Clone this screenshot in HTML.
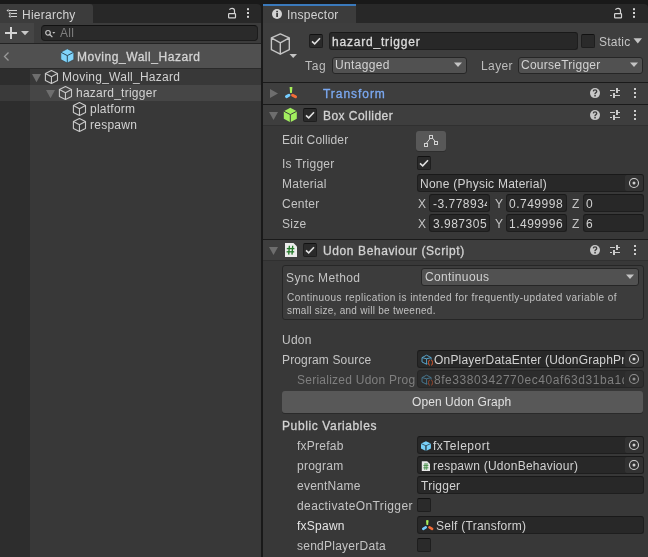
<!DOCTYPE html>
<html><head><meta charset="utf-8">
<style>
*{margin:0;padding:0;box-sizing:border-box}
html,body{width:648px;height:557px;overflow:hidden;background:#191919;font-family:"Liberation Sans",sans-serif;}
.a{position:absolute}
.t{will-change:transform;position:absolute;font-size:12px;line-height:14px;white-space:nowrap;color:#d2d2d2;letter-spacing:0.25px}
.b{-webkit-text-stroke:0.3px currentColor}
.fld{position:absolute;background:#282828;border:1px solid #1e1e1e;border-top-color:#191919;border-radius:3px}
.pop{position:absolute;background:#515151;border:1px solid #262626;border-radius:3px}
.chk{position:absolute;width:14px;height:14px;background:#2a2a2a;border:1px solid #1e1e1e;border-top-color:#111;border-radius:2px}
svg{position:absolute;overflow:visible}
</style></head><body>

<!-- ============ HIERARCHY PANEL ============ -->
<div class="a" style="left:0;top:4px;width:261px;height:19px;background:#282828;border-top-right-radius:4px"></div>
<div class="a" style="left:0;top:4px;width:93px;height:19px;background:#3c3c3c;border-top-right-radius:3px"></div>
<!-- hierarchy icon -->
<svg style="left:0;top:0" width="24" height="24">
  <g fill="none" stroke="#d2d2d2" stroke-width="1">
    <line x1="9" y1="10.5" x2="17" y2="10.5"/>
    <line x1="11" y1="13.5" x2="17" y2="13.5"/>
    <line x1="11" y1="16.5" x2="17" y2="16.5"/>
    <line x1="9.5" y1="11.5" x2="9.5" y2="16.5" stroke-width="0.6" opacity="0.6"/>
  </g>
  <g fill="#d2d2d2"><path d="M6.5 10.5 L8.5 9 L8.5 12Z"/><path d="M8.5 13.5 L10.5 12 L10.5 15Z"/><path d="M8.5 16.5 L10.5 15 L10.5 18Z"/></g>
</svg>
<div class="t" style="left:22px;top:8px">Hierarchy</div>
<!-- lock + kebab -->
<svg style="left:220px;top:4px" width="40" height="18">
  <rect x="8.6" y="9.6" width="6.9" height="4.2" rx="0.6" fill="none" stroke="#d4d4d4" stroke-width="1.2"/>
  <path d="M9.4 5.7 Q10.4 4.3 12 4.3 Q14.5 4.3 14.5 6.6 L14.5 9.6" fill="none" stroke="#d4d4d4" stroke-width="1.2"/>
  <rect x="27" y="4.2" width="2" height="2" fill="#d4d4d4"/>
  <rect x="27" y="8" width="2" height="2" fill="#d4d4d4"/>
  <rect x="27" y="11.8" width="2" height="2" fill="#d4d4d4"/>
</svg>

<!-- toolbar -->
<div class="a" style="left:0;top:23px;width:261px;height:20px;background:#3c3c3c"></div>
<div class="a" style="left:0;top:23px;width:34px;height:20px;background:#454545"></div>
<div class="a" style="left:0;top:43px;width:261px;height:1px;background:#232323"></div>
<svg style="left:0;top:23px" width="34" height="21">
  <rect x="5" y="9" width="12" height="2" fill="#d4d4d4"/>
  <rect x="10" y="4" width="2" height="12" fill="#d4d4d4"/>
  <path d="M21 8 L29 8 L25 12.3Z" fill="#c8c8c8"/>
</svg>
<div class="fld" style="left:41px;top:25px;width:217px;height:16px;border-radius:4px;background:#2a2a2a;border-color:#1c1c1c;border-top-color:#111"></div>
<svg style="left:41px;top:25px" width="20" height="16">
  <circle cx="7" cy="7.8" r="2.3" fill="none" stroke="#c4c4c4" stroke-width="1.2"/>
  <line x1="8.7" y1="9.5" x2="11.4" y2="12.2" stroke="#c4c4c4" stroke-width="1.2"/>
  <path d="M11.3 6.9 L14.3 6.9 L12.8 8.8Z" fill="#c4c4c4"/>
</svg>
<div class="t" style="left:60px;top:26px;color:#7f7f7f">All</div>

<!-- hierarchy body -->
<div class="a" style="left:0;top:44px;width:261px;height:513px;background:#383838"></div>
<div class="a" style="left:0;top:69px;width:30px;height:488px;background:#2d2d2d"></div>
<!-- prefab header -->
<div class="a" style="left:0;top:44px;width:261px;height:24px;background:#505050"></div>
<div class="a" style="left:0;top:68px;width:261px;height:1px;background:#2a2a2a"></div>
<svg style="left:0;top:44px" width="14" height="24">
  <path d="M8.5 8.5 L4.5 12.5 L8.5 16.5" fill="none" stroke="#9a9a9a" stroke-width="1.3"/>
</svg>
<!-- blue cube -->
<svg style="left:60px;top:48px" width="16" height="16">
  <path d="M7.3 0.8 L13.8 4.2 L13.8 11.6 L7.3 15 L0.8 11.6 L0.8 4.2Z" fill="#80d4fb" stroke="#3a3a3a" stroke-width="0.6"/>
  <path d="M0.8 4.2 L7.3 7.6 L13.8 4.2 M7.3 7.6 L7.3 15" fill="none" stroke="#2c4a5c" stroke-width="1"/>
</svg>
<div class="t b" style="left:77px;top:50px;color:#d4d4d4;letter-spacing:0.55px">Moving_Wall_Hazard</div>

<!-- selected row -->
<div class="a" style="left:30px;top:85px;width:231px;height:16px;background:#464646"></div>
<div class="a" style="left:0;top:85px;width:30px;height:16px;background:#3a3a3a"></div>

<!-- tree rows -->
<svg style="left:32px;top:74px" width="10" height="10"><path d="M0 0 L9 0 L4.5 8.3Z" fill="#6e6e6e"/></svg>
<svg style="left:46px;top:90px" width="10" height="10"><path d="M0 0 L9 0 L4.5 8.3Z" fill="#6e6e6e"/></svg>
<!-- wire cube template -->
<svg style="left:44px;top:69px" width="16" height="16">
  <path d="M7.45 1.45 L13.5 4.6 L13.5 11.4 L7.45 14.55 L1.4 11.4 L1.4 4.6Z M1.4 4.6 L7.45 7.75 L13.5 4.6 M7.45 7.75 L7.45 14.55" fill="none" stroke="#c8c8c8" stroke-width="1.1" stroke-linejoin="round"/>
</svg>
<svg style="left:58px;top:85px" width="16" height="16">
  <path d="M7.45 1.45 L13.5 4.6 L13.5 11.4 L7.45 14.55 L1.4 11.4 L1.4 4.6Z M1.4 4.6 L7.45 7.75 L13.5 4.6 M7.45 7.75 L7.45 14.55" fill="none" stroke="#c8c8c8" stroke-width="1.1" stroke-linejoin="round"/>
</svg>
<svg style="left:72px;top:101px" width="16" height="16">
  <path d="M7.45 1.45 L13.5 4.6 L13.5 11.4 L7.45 14.55 L1.4 11.4 L1.4 4.6Z M1.4 4.6 L7.45 7.75 L13.5 4.6 M7.45 7.75 L7.45 14.55" fill="none" stroke="#c8c8c8" stroke-width="1.1" stroke-linejoin="round"/>
</svg>
<svg style="left:72px;top:117px" width="16" height="16">
  <path d="M7.45 1.45 L13.5 4.6 L13.5 11.4 L7.45 14.55 L1.4 11.4 L1.4 4.6Z M1.4 4.6 L7.45 7.75 L13.5 4.6 M7.45 7.75 L7.45 14.55" fill="none" stroke="#c8c8c8" stroke-width="1.1" stroke-linejoin="round"/>
</svg>
<div class="t" style="left:62px;top:70px">Moving_Wall_Hazard</div>
<div class="t" style="left:76px;top:86px">hazard_trigger</div>
<div class="t" style="left:90px;top:102px">platform</div>
<div class="t" style="left:90px;top:118px">respawn</div>

<!-- ============ INSPECTOR PANEL ============ -->
<div class="a" style="left:263px;top:4px;width:385px;height:19px;background:#282828;border-top-right-radius:4px"></div>
<div class="a" style="left:263px;top:4px;width:93px;height:19px;background:#3c3c3c"></div>
<div class="a" style="left:263px;top:4px;width:93px;height:2px;background:#3a79bb"></div>
<svg style="left:263px;top:4px" width="24" height="19">
  <circle cx="14" cy="10" r="5" fill="#d2d2d2"/>
  <rect x="13.2" y="9" width="1.8" height="4" fill="#3c3c3c"/>
  <rect x="13.2" y="6.8" width="1.8" height="1.5" fill="#3c3c3c"/>
</svg>
<div class="t" style="left:287px;top:8px">Inspector</div>
<svg style="left:606px;top:4px" width="40" height="18">
  <rect x="8.6" y="9.6" width="6.9" height="4.2" rx="0.6" fill="none" stroke="#d4d4d4" stroke-width="1.2"/>
  <path d="M9.4 5.7 Q10.4 4.3 12 4.3 Q14.5 4.3 14.5 6.6 L14.5 9.6" fill="none" stroke="#d4d4d4" stroke-width="1.2"/>
  <rect x="27" y="4.2" width="2" height="2" fill="#d4d4d4"/>
  <rect x="27" y="8" width="2" height="2" fill="#d4d4d4"/>
  <rect x="27" y="11.8" width="2" height="2" fill="#d4d4d4"/>
</svg>

<div class="a" style="left:263px;top:23px;width:385px;height:534px;background:#383838"></div>

<!-- GameObject header -->
<div class="a" style="left:263px;top:23px;width:385px;height:59px;background:#3e3e3e"></div>
<svg style="left:268px;top:32px" width="32" height="28">
  <path d="M12.3 1.9 L21.3 5.9 L21.3 17.7 L12.3 22.2 L3.4 17.7 L3.4 5.9Z M3.4 5.9 L12.3 10.9 L21.3 5.9 M12.3 10.9 L12.3 22.2" fill="none" stroke="#c4c4c4" stroke-width="1.4" stroke-linejoin="round"/>
  <path d="M21.5 22 L29 22 L25.2 26Z" fill="#c4c4c4"/>
</svg>
<div class="chk" style="left:309px;top:34px"></div>
<svg style="left:309px;top:34px" width="14" height="14"><path d="M3 7.3 L5.7 9.8 L11 4.2" fill="none" stroke="#e0e0e0" stroke-width="1.6"/></svg>
<div class="fld" style="left:329px;top:32px;width:249px;height:18px"></div>
<div class="t b" style="left:332px;top:35px;color:#dcdcdc;letter-spacing:0.8px">hazard_trigger</div>
<div class="chk" style="left:581px;top:34px"></div>
<div class="t" style="left:599px;top:35px;color:#c4c4c4">Static</div>
<svg style="left:632px;top:36px" width="12" height="10"><path d="M1.5 2.3 L10 2.3 L5.8 7.5Z" fill="#c4c4c4"/></svg>

<div class="t" style="left:305px;top:59px;color:#bdbdbd;letter-spacing:0.65px">Tag</div>
<div class="pop" style="left:332px;top:57px;width:135px;height:17px"></div>
<div class="t" style="left:335px;top:58px;letter-spacing:0.33px">Untagged</div>
<svg style="left:453px;top:62px" width="10" height="6"><path d="M1 0.5 L9 0.5 L5 5Z" fill="#c4c4c4"/></svg>
<div class="t" style="left:481px;top:59px;color:#bdbdbd;letter-spacing:0.4px">Layer</div>
<div class="pop" style="left:518px;top:57px;width:125px;height:17px"></div>
<div class="t" style="left:521px;top:58px">CourseTrigger</div>
<svg style="left:629px;top:62px" width="10" height="6"><path d="M1 0.5 L9 0.5 L5 5Z" fill="#c4c4c4"/></svg>

<!-- Transform header -->
<div class="a" style="left:263px;top:82px;width:385px;height:1px;background:#1a1a1a"></div>
<div class="a" style="left:263px;top:83px;width:385px;height:21px;background:#3e3e3e"></div>
<svg style="left:270px;top:89px" width="9" height="10"><path d="M0 0 L8 4.5 L0 9Z" fill="#6e6e6e"/></svg>
<svg style="left:283px;top:86px" width="16" height="14">
  <path d="M6.6 1 L9.4 1 L8.9 7 L7.1 7Z" fill="#a8f05a"/>
  <line x1="3.5" y1="10.6" x2="5.9" y2="9.2" stroke="#74ccff" stroke-width="3" stroke-linecap="round"/>
  <line x1="9.6" y1="9.2" x2="12.5" y2="10.8" stroke="#f46c38" stroke-width="3" stroke-linecap="round"/>
</svg>
<div class="t b" style="left:323px;top:87px;color:#7ba9f2;letter-spacing:0.95px">Transform</div>
<svg style="left:588px;top:86px" width="50" height="14">
  <circle cx="7" cy="7.1" r="5" fill="#c8c8c8"/>
  <path d="M5.3 5.4 Q5.4 3.9 7 3.9 Q8.7 3.9 8.7 5.3 Q8.7 6.2 7.7 6.8 Q7 7.2 7 8.2" fill="none" stroke="#3e3e3e" stroke-width="1.4"/>
  <rect x="6.3" y="9" width="1.5" height="1.5" fill="#3e3e3e"/>
  <g fill="#cccccc">
    <rect x="22" y="4" width="5" height="1"/><rect x="28" y="2" width="2" height="5"/><rect x="30" y="4" width="2" height="1"/>
    <rect x="22" y="9" width="2" height="1"/><rect x="25" y="7" width="2" height="5"/><rect x="27" y="9" width="5" height="1"/>
    <rect x="46" y="2" width="2" height="2"/><rect x="46" y="6" width="2" height="2"/><rect x="46" y="10" width="2" height="2"/>
  </g>
</svg>

<!-- Box Collider header -->
<div class="a" style="left:263px;top:104px;width:385px;height:1px;background:#1a1a1a"></div>
<div class="a" style="left:263px;top:105px;width:385px;height:20px;background:#3e3e3e"></div>
<div class="a" style="left:263px;top:125px;width:385px;height:1px;background:#303030"></div>
<svg style="left:269px;top:111px" width="10" height="10"><path d="M0 1 L9 1 L4.5 9Z" fill="#6e6e6e"/></svg>
<svg style="left:283px;top:107px" width="16" height="16">
  <path d="M7.3 0.8 L13.8 4.2 L13.8 11.8 L7.3 15.2 L0.8 11.8 L0.8 4.2Z" fill="#a2ef5e"/>
  <path d="M0.8 4.2 L7.3 7.6 L13.8 4.2 M7.3 7.6 L7.3 15.2" fill="none" stroke="#3e3e3e" stroke-width="1"/>
</svg>
<div class="chk" style="left:303px;top:108px"></div>
<svg style="left:303px;top:108px" width="14" height="14"><path d="M3 7.3 L5.7 9.8 L11 4.2" fill="none" stroke="#e0e0e0" stroke-width="1.6"/></svg>
<div class="t b" style="left:323px;top:109px;color:#d2d2d2;letter-spacing:0.45px">Box Collider</div>
<svg style="left:588px;top:108px" width="50" height="14">
  <circle cx="7" cy="7.1" r="5" fill="#c8c8c8"/>
  <path d="M5.3 5.4 Q5.4 3.9 7 3.9 Q8.7 3.9 8.7 5.3 Q8.7 6.2 7.7 6.8 Q7 7.2 7 8.2" fill="none" stroke="#3e3e3e" stroke-width="1.4"/>
  <rect x="6.3" y="9" width="1.5" height="1.5" fill="#3e3e3e"/>
  <g fill="#cccccc">
    <rect x="22" y="4" width="5" height="1"/><rect x="28" y="2" width="2" height="5"/><rect x="30" y="4" width="2" height="1"/>
    <rect x="22" y="9" width="2" height="1"/><rect x="25" y="7" width="2" height="5"/><rect x="27" y="9" width="5" height="1"/>
    <rect x="46" y="2" width="2" height="2"/><rect x="46" y="6" width="2" height="2"/><rect x="46" y="10" width="2" height="2"/>
  </g>
</svg>

<!-- Box Collider body -->
<div class="t" style="left:282px;top:133px;color:#c4c4c4;letter-spacing:0.12px">Edit Collider</div>
<div class="a" style="left:416px;top:131px;width:30px;height:20px;background:#585858;border-radius:3px;box-shadow:0 1px 0 #2e2e2e"></div>
<svg style="left:416px;top:131px" width="30" height="20">
  <path d="M10.3 12.3 L14 7.6 M16.8 7.4 L19.2 10.6" fill="none" stroke="#d2d2d2" stroke-width="1"/>
  <rect x="13.5" y="4.5" width="3" height="3" fill="#585858" stroke="#d2d2d2" stroke-width="1"/>
  <rect x="8.5" y="12.5" width="3" height="3" fill="#585858" stroke="#d2d2d2" stroke-width="1"/>
  <rect x="18.5" y="10.5" width="3" height="3" fill="#585858" stroke="#d2d2d2" stroke-width="1"/>
</svg>
<div class="t" style="left:282px;top:157px;color:#c4c4c4">Is Trigger</div>
<div class="chk" style="left:417px;top:156px"></div>
<svg style="left:417px;top:156px" width="14" height="14"><path d="M3 7.3 L5.7 9.8 L11 4.2" fill="none" stroke="#e0e0e0" stroke-width="1.6"/></svg>
<div class="t" style="left:282px;top:177px;color:#c4c4c4">Material</div>
<div class="fld" style="left:417px;top:174px;width:227px;height:18px"></div>
<div class="a" style="left:625px;top:175px;width:18px;height:16px;background:#323232;border-radius:2px"></div>
<div class="t" style="left:420px;top:177px">None (Physic Material)</div>
<svg style="left:625px;top:174px" width="18" height="18">
  <circle cx="9" cy="9" r="4.5" fill="none" stroke="#d0d0d0" stroke-width="1.1"/>
  <circle cx="9" cy="9" r="1.5" fill="#d0d0d0"/>
</svg>
<div class="t" style="left:282px;top:197px;color:#c4c4c4">Center</div>
<div class="t" style="left:418px;top:197px;color:#c4c4c4">X</div>
<div class="fld" style="left:429px;top:194px;width:61px;height:18px"></div>
<div class="t" style="left:433px;top:197px;width:54px;overflow:hidden;letter-spacing:0.5px">-3.778934</div>
<div class="t" style="left:495px;top:197px;color:#c4c4c4">Y</div>
<div class="fld" style="left:506px;top:194px;width:61px;height:18px"></div>
<div class="t" style="left:509px;top:197px;letter-spacing:0.5px">0.749998</div>
<div class="t" style="left:572px;top:197px;color:#c4c4c4">Z</div>
<div class="fld" style="left:583px;top:194px;width:61px;height:18px"></div>
<div class="t" style="left:586px;top:197px">0</div>

<div class="t" style="left:282px;top:217px;color:#c4c4c4">Size</div>
<div class="t" style="left:418px;top:217px;color:#c4c4c4">X</div>
<div class="fld" style="left:429px;top:214px;width:61px;height:18px"></div>
<div class="t" style="left:433px;top:217px;letter-spacing:0.5px">3.987305</div>
<div class="t" style="left:495px;top:217px;color:#c4c4c4">Y</div>
<div class="fld" style="left:506px;top:214px;width:61px;height:18px"></div>
<div class="t" style="left:509px;top:217px;letter-spacing:0.5px">1.499996</div>
<div class="t" style="left:572px;top:217px;color:#c4c4c4">Z</div>
<div class="fld" style="left:583px;top:214px;width:61px;height:18px"></div>
<div class="t" style="left:586px;top:217px">6</div>

<!-- Udon Behaviour header -->
<div class="a" style="left:263px;top:239px;width:385px;height:1px;background:#1a1a1a"></div>
<div class="a" style="left:263px;top:240px;width:385px;height:20px;background:#3e3e3e"></div>
<div class="a" style="left:263px;top:260px;width:385px;height:1px;background:#303030"></div>
<svg style="left:269px;top:246px" width="10" height="10"><path d="M0 1 L9 1 L4.5 9Z" fill="#6e6e6e"/></svg>
<svg style="left:284px;top:242px" width="14" height="16">
  <path d="M1 1 L9.5 1 L13 4.5 L13 15 L1 15Z" fill="#ececec"/>
  <g stroke="#24792a" stroke-width="1.3"><line x1="5.4" y1="3.8" x2="4.7" y2="12.6"/><line x1="8.7" y1="3.8" x2="8" y2="12.6"/><line x1="2.8" y1="6.6" x2="10.4" y2="6.6"/><line x1="2.6" y1="9.8" x2="10.2" y2="9.8"/></g>
</svg>
<div class="chk" style="left:303px;top:243px"></div>
<svg style="left:303px;top:243px" width="14" height="14"><path d="M3 7.3 L5.7 9.8 L11 4.2" fill="none" stroke="#e0e0e0" stroke-width="1.6"/></svg>
<div class="t b" style="left:323px;top:244px;color:#d2d2d2;letter-spacing:0.6px">Udon Behaviour (Script)</div>
<svg style="left:588px;top:243px" width="50" height="14">
  <circle cx="7" cy="7.1" r="5" fill="#c8c8c8"/>
  <path d="M5.3 5.4 Q5.4 3.9 7 3.9 Q8.7 3.9 8.7 5.3 Q8.7 6.2 7.7 6.8 Q7 7.2 7 8.2" fill="none" stroke="#3e3e3e" stroke-width="1.4"/>
  <rect x="6.3" y="9" width="1.5" height="1.5" fill="#3e3e3e"/>
  <g fill="#cccccc">
    <rect x="22" y="4" width="5" height="1"/><rect x="28" y="2" width="2" height="5"/><rect x="30" y="4" width="2" height="1"/>
    <rect x="22" y="9" width="2" height="1"/><rect x="25" y="7" width="2" height="5"/><rect x="27" y="9" width="5" height="1"/>
    <rect x="46" y="2" width="2" height="2"/><rect x="46" y="6" width="2" height="2"/><rect x="46" y="10" width="2" height="2"/>
  </g>
</svg>

<!-- Sync box -->
<div class="a" style="left:282px;top:265px;width:362px;height:55px;background:#3c3c3c;border:1px solid #262626;border-radius:3px"></div>
<div class="t" style="left:286px;top:271px;color:#c4c4c4;letter-spacing:0.4px">Sync Method</div>
<div class="pop" style="left:421px;top:268px;width:218px;height:18px"></div>
<div class="t" style="left:425px;top:270px;letter-spacing:0.36px">Continuous</div>
<svg style="left:625px;top:274px" width="10" height="6"><path d="M1 0.5 L9 0.5 L5 5Z" fill="#c4c4c4"/></svg>
<div class="t" style="left:287px;top:292px;font-size:10px;line-height:12px;letter-spacing:0.44px;color:#c0c0c0">Continuous replication is intended for frequently-updated variable of</div>
<div class="t" style="left:287px;top:305px;font-size:10px;line-height:12px;letter-spacing:0.27px;color:#c0c0c0">small size, and will be tweened.</div>

<!-- Udon section -->
<div class="t" style="left:282px;top:333px;color:#c4c4c4">Udon</div>
<div class="t" style="left:282px;top:353px;color:#c4c4c4;letter-spacing:0.14px">Program Source</div>
<div class="fld" style="left:417px;top:350px;width:227px;height:18px"></div>
<div class="a" style="left:625px;top:351px;width:18px;height:16px;background:#323232;border-radius:2px"></div>
<svg style="left:419.5px;top:353.3px" width="16" height="14">
  <path d="M6.6 2.2 L11.1 4.6 L11.1 9 L6.6 11.2 L2 9 L2 4.6Z M2 4.6 L6.6 5.8 L11.1 4.6 M6.6 5.8 L6.6 11.2" fill="none" stroke="#5aa8d0" stroke-width="0.95" stroke-linejoin="round"/>
  <rect x="7.4" y="6.6" width="6.4" height="6.2" fill="#2a2a2a"/>
  <path d="M9.8 7.2 Q8.7 7.2 8.7 8.2 L8.7 9.2 L8 9.7 L8.7 10.2 L8.7 11.2 Q8.7 12.2 9.8 12.2 M11.2 7.2 Q12.3 7.2 12.3 8.2 L12.3 9.2 L13 9.7 L12.3 10.2 L12.3 11.2 Q12.3 12.2 11.2 12.2" fill="none" stroke="#d85a30" stroke-width="1"/>
</svg>
<div class="t" style="left:434px;top:353px;width:190px;overflow:hidden;letter-spacing:0.2px">OnPlayerDataEnter (UdonGraphProgramAsset)</div>
<svg style="left:625px;top:350px" width="18" height="18">
  <circle cx="9" cy="9" r="4.5" fill="none" stroke="#d0d0d0" stroke-width="1.1"/>
  <circle cx="9" cy="9" r="1.5" fill="#d0d0d0"/>
</svg>
<div class="t" style="left:297px;top:373px;color:#7f7f7f">Serialized Udon Prog</div>
<div class="fld" style="left:417px;top:370px;width:227px;height:18px;background:#2c2c2c;border-color:#262626"></div>
<div class="a" style="left:625px;top:371px;width:18px;height:16px;background:#303030;border-radius:2px"></div>
<svg style="left:419.5px;top:373.3px" width="16" height="14" opacity="0.6">
  <path d="M6.6 2.2 L11.1 4.6 L11.1 9 L6.6 11.2 L2 9 L2 4.6Z M2 4.6 L6.6 5.8 L11.1 4.6 M6.6 5.8 L6.6 11.2" fill="none" stroke="#5aa8d0" stroke-width="0.95" stroke-linejoin="round"/>
  <rect x="7.4" y="6.6" width="6.4" height="6.2" fill="#2a2a2a"/>
  <path d="M9.8 7.2 Q8.7 7.2 8.7 8.2 L8.7 9.2 L8 9.7 L8.7 10.2 L8.7 11.2 Q8.7 12.2 9.8 12.2 M11.2 7.2 Q12.3 7.2 12.3 8.2 L12.3 9.2 L13 9.7 L12.3 10.2 L12.3 11.2 Q12.3 12.2 11.2 12.2" fill="none" stroke="#d85a30" stroke-width="1"/>
</svg>
<div class="t" style="left:434px;top:373px;width:190px;overflow:hidden;color:#7f7f7f;letter-spacing:0.55px">8fe3380342770ec40af63d31ba1d2c</div>
<svg style="left:625px;top:370px" width="18" height="18" opacity="0.6">
  <circle cx="9" cy="9" r="4.5" fill="none" stroke="#d0d0d0" stroke-width="1.1"/>
  <circle cx="9" cy="9" r="1.5" fill="#d0d0d0"/>
</svg>
<div class="a" style="left:282px;top:391px;width:361px;height:22px;background:#585858;border-radius:3px;box-shadow:0 1px 0 #2a2a2a"></div>
<div class="t" style="left:412px;top:395px;color:#e0e0e0;letter-spacing:0.08px">Open Udon Graph</div>

<!-- Public Variables -->
<div class="t b" style="left:282px;top:419px;color:#d2d2d2;letter-spacing:0.62px">Public Variables</div>
<div class="t" style="left:297px;top:439px;color:#c4c4c4">fxPrefab</div>
<div class="fld" style="left:417px;top:436px;width:227px;height:18px"></div>
<div class="a" style="left:625px;top:437px;width:18px;height:16px;background:#323232;border-radius:2px"></div>
<svg style="left:420.8px;top:441px" width="12" height="12">
  <path d="M4.95 0.2 L9.9 2.5 L9.9 7.6 L4.95 10 L0 7.6 L0 2.5Z" fill="#78d0f8"/>
  <path d="M0 2.5 L4.95 4.8 L9.9 2.5" fill="none" stroke="#2a3f4c" stroke-width="0.8"/>
  <path d="M4.95 4.8 L4.95 10" fill="none" stroke="#1e2a32" stroke-width="1.2"/>
</svg>
<div class="t" style="left:433px;top:439px;letter-spacing:0.5px">fxTeleport</div>
<svg style="left:625px;top:436px" width="18" height="18">
  <circle cx="9" cy="9" r="4.5" fill="none" stroke="#d0d0d0" stroke-width="1.1"/>
  <circle cx="9" cy="9" r="1.5" fill="#d0d0d0"/>
</svg>

<div class="t" style="left:297px;top:459px;color:#c4c4c4">program</div>
<div class="fld" style="left:417px;top:456px;width:227px;height:18px"></div>
<div class="a" style="left:625px;top:457px;width:18px;height:16px;background:#323232;border-radius:2px"></div>
<svg style="left:421px;top:460.6px" width="10" height="12">
  <path d="M0.8 0.3 L6.2 0.3 L9 3.1 L9 10 L0.8 10Z" fill="#e8e8e8"/>
  <g stroke="#3d8a40" stroke-width="0.9"><line x1="4.1" y1="2" x2="3.8" y2="8.8"/><line x1="6" y1="2" x2="5.7" y2="8.8"/><line x1="2.4" y1="4.4" x2="7.4" y2="4.4"/><line x1="2.4" y1="6.8" x2="7.4" y2="6.8"/></g>
</svg>
<div class="t" style="left:433px;top:459px">respawn (UdonBehaviour)</div>
<svg style="left:625px;top:456px" width="18" height="18">
  <circle cx="9" cy="9" r="4.5" fill="none" stroke="#d0d0d0" stroke-width="1.1"/>
  <circle cx="9" cy="9" r="1.5" fill="#d0d0d0"/>
</svg>

<div class="t" style="left:297px;top:479px;color:#c4c4c4">eventName</div>
<div class="fld" style="left:417px;top:476px;width:227px;height:18px"></div>
<div class="t" style="left:421px;top:479px">Trigger</div>

<div class="t" style="left:297px;top:499px;color:#c4c4c4;letter-spacing:0.4px">deactivateOnTrigger</div>
<div class="chk" style="left:417px;top:498px"></div>

<div class="t" style="left:297px;top:519px;color:#e4e4e4">fxSpawn</div>
<div class="fld" style="left:417px;top:516px;width:227px;height:18px"></div>
<svg style="left:420px;top:518px" width="16" height="14">
  <path d="M6 2.4 Q7.2 1.4 8.6 2.4 L8.1 7 L6.5 7Z" fill="#a8f05a"/>
  <line x1="3.3" y1="10.8" x2="5.7" y2="9.4" stroke="#74ccff" stroke-width="2.6" stroke-linecap="round"/>
  <line x1="9.5" y1="9.4" x2="12.1" y2="10.8" stroke="#f46c38" stroke-width="2.6" stroke-linecap="round"/>
</svg>
<div class="t" style="left:436px;top:519px">Self (Transform)</div>

<div class="t" style="left:297px;top:539px;color:#c4c4c4">sendPlayerData</div>
<div class="chk" style="left:417px;top:538px"></div>

</body></html>
